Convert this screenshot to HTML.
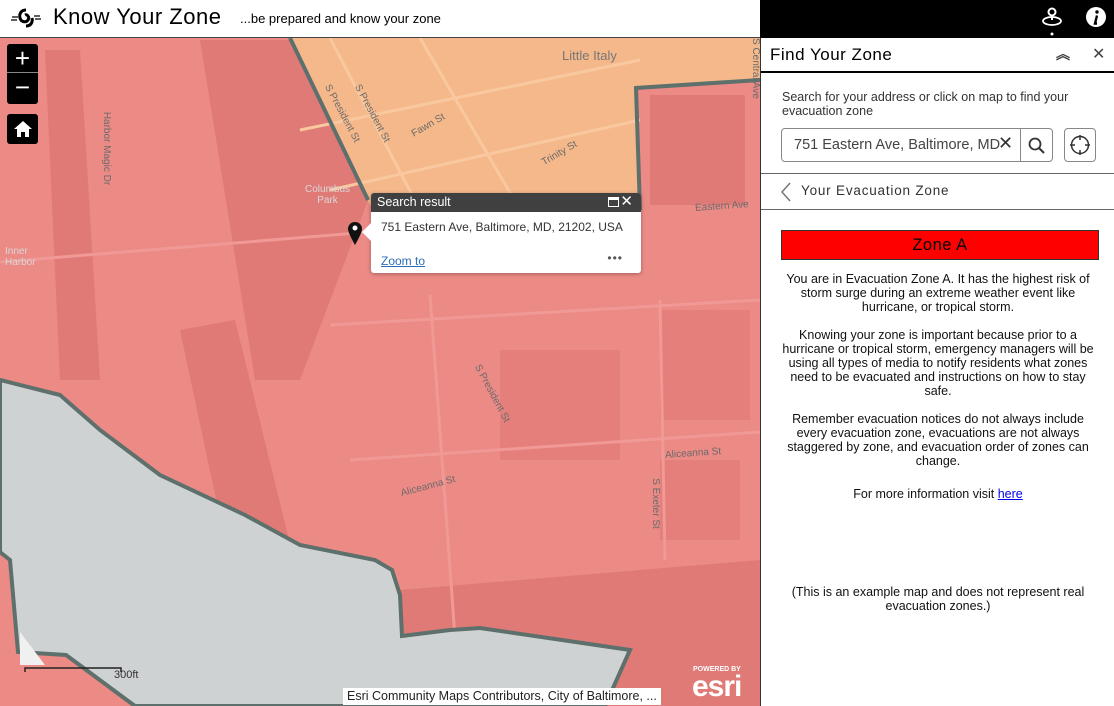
<!DOCTYPE html>
<html><head><meta charset="utf-8"><style>
*{margin:0;padding:0;box-sizing:border-box}
body{width:1114px;height:706px;overflow:hidden;font-family:"Liberation Sans",sans-serif;background:#fff;position:relative}
.hdr{position:absolute;left:0;top:0;width:760px;height:38px;background:#fff;border-bottom:1px solid #444}
.topr{position:absolute;left:760px;top:0;width:354px;height:38px;background:#000}
.map{position:absolute;left:0;top:38px;width:760px;height:668px;overflow:hidden}
.panel{position:absolute;left:760px;top:38px;width:354px;height:668px;background:#fff;border-left:1px solid #333}
.btn{position:absolute;left:7px;width:31px;background:#000;border-radius:3px;color:#fff;text-align:center}
.lbl{position:absolute;font-size:10px;color:#6b6b6b;white-space:nowrap}
</style></head><body>
<div class="hdr">
 <svg style="position:absolute;left:10px;top:7px" width="32" height="22" viewBox="0 0 32 22"><path d="M16 3c-5 0-7 4-6 8 1 4 6 5 8 2 2-3-1-6-3-5M16 19c5 0 7-4 6-8" stroke="#000" stroke-width="3" fill="none"/><path d="M2 10h6M1 13h6M24 9h6M25 12h6" stroke="#000" stroke-width="1.2"/></svg>
 <div style="position:absolute;left:53px;top:4px;font-size:22px;letter-spacing:0.5px">Know Your Zone</div>
 <div style="position:absolute;left:240px;top:11px;font-size:13px">...be prepared and know your zone</div>
</div>
<div class="topr">
 <svg style="position:absolute;left:1041px;left:281px;top:6px" width="22" height="30" viewBox="0 0 22 30"><circle cx="11" cy="6" r="3.5" fill="none" stroke="#fff" stroke-width="2"/><path d="M11 10v4" stroke="#fff" stroke-width="2"/><ellipse cx="11" cy="15" rx="9" ry="4" fill="none" stroke="#fff" stroke-width="1.8"/><circle cx="11" cy="28" r="1.5" fill="#fff"/></svg>
 <svg style="position:absolute;left:325px;top:6px" width="22" height="22" viewBox="0 0 22 22"><circle cx="11" cy="11" r="10" fill="#fff"/><circle cx="12" cy="6" r="1.7" fill="#000"/><path d="M12 9.5l-2 8h2" stroke="#000" stroke-width="2.4" fill="none"/></svg>
</div>
<div class="map">
<svg width="760" height="668" viewBox="0 38 760 668" style="position:absolute;left:0;top:0">
 <rect x="0" y="38" width="760" height="668" fill="#ec8a86"/>
 <polygon points="45,50 80,50 100,380 60,380" fill="#df7a77"/>
 <polygon points="200,40 290,40 370,195 300,380 255,380" fill="#df7a77"/>
 <polygon points="180,330 235,320 330,706 260,706" fill="#df7a77"/>
 <polygon points="400,590 760,560 760,706 400,706" fill="#df7a77"/>
 <rect x="650" y="95" width="95" height="110" fill="#df7a77"/>
 <rect x="500" y="350" width="120" height="110" fill="#e47f7c"/>
 <rect x="660" y="310" width="90" height="110" fill="#e47f7c"/>
 <rect x="660" y="460" width="80" height="80" fill="#e47f7c"/>
 <path d="M0 262 L370 232 M330 325 L760 300 M350 460 L760 432 M430 295 L460 706 M660 300 L665 560" stroke="#f09995" stroke-width="3" fill="none"/>
 <polygon points="290,38 760,38 760,80 636,88 640,210 370,205" fill="#f5b88b"/>
 <path d="M330 38 L420 210 M420 38 L520 210 M300 130 L640 60 M330 190 L640 120" stroke="#f9c89f" stroke-width="3" fill="none"/>
 <path d="M290,38 L368,200 M760,80 L636,88 L640,210" stroke="#5d706c" stroke-width="4" fill="none"/>
 <polygon points="0,380 60,395 100,430 160,475 245,515 300,545 375,560 392,570 400,595 402,636 450,630 480,628 630,650 605,706 135,706 66,655 18,652 10,560 0,552" fill="#cfd2d3" stroke="#5d706c" stroke-width="4"/>
 <polygon points="20,632 45,665 20,665" fill="#f0f0f0"/>
 <path d="M25 672 v-4 h96 v4" stroke="#222" stroke-width="1.5" fill="none"/>
</svg>
 <div class="lbl" style="left:562px;top:10px;font-size:13px;color:#777">Little Italy</div>
 <div class="lbl" style="left:305px;top:146px;color:#d8d8d8;text-align:center;line-height:11px">Columbus<br>Park</div>
 <div class="lbl" style="left:5px;top:208px;color:#d8d8d8;line-height:11px">Inner<br>Harbor</div>
 <div class="lbl" style="left:695px;top:163px;transform:rotate(-4deg)">Eastern Ave</div>
 <div class="lbl" style="left:665px;top:410px;transform:rotate(-4deg)">Aliceanna St</div>
 <div class="lbl" style="left:400px;top:443px;transform:rotate(-15deg)">Aliceanna St</div>
 <div class="lbl" style="left:410px;top:82px;transform:rotate(-30deg)">Fawn St</div>
 <div class="lbl" style="left:540px;top:110px;transform:rotate(-30deg)">Trinity St</div>
 <div class="lbl" style="left:70px;top:105px;transform:rotate(90deg)">Harbor Magic Dr</div>
 <div class="lbl" style="left:310px;top:70px;transform:rotate(62deg)">S President St</div>
 <div class="lbl" style="left:340px;top:70px;transform:rotate(62deg)">S President St</div>
 <div class="lbl" style="left:460px;top:350px;transform:rotate(62deg)">S President St</div>
 <div class="lbl" style="left:630px;top:460px;transform:rotate(90deg)">S Exeter St</div>
 <div class="lbl" style="left:725px;top:25px;transform:rotate(90deg)">S Central Ave</div>
 <div class="lbl" style="left:114px;top:631px;color:#333;font-size:11px">300ft</div>
 <div style="position:absolute;left:343px;top:650px;background:#fff;font-size:12.5px;padding:0 4px;height:17px;line-height:17px;color:#222">Esri Community Maps Contributors, City of Baltimore, ...</div>
 <div style="position:absolute;left:693px;top:628px;color:#fff;font-size:7px;font-weight:bold">POWERED BY</div>
 <div style="position:absolute;left:692px;top:632px;color:#fff;font-size:30px;font-weight:bold;letter-spacing:-1px">esri</div>
 <div class="btn" style="top:6px;height:60px;font-size:26px;line-height:28px">+<div style="border-top:1px solid #888"></div>−</div>
 <div class="btn" style="top:76px;height:30px"><svg width="20" height="18" viewBox="0 0 20 18" style="margin-top:6px"><path d="M10 1L1 9h3v8h4v-5h4v5h4V9h3z" fill="#fff"/></svg></div>
 <svg style="position:absolute;left:348px;top:184px" width="14" height="24" viewBox="0 0 14 24"><path d="M7 0C3 0 0 3 0 7c0 4 7 16 7 16s7-12 7-16c0-4-3-7-7-7z" fill="#111"/><circle cx="7" cy="6" r="2.5" fill="#fff"/></svg>
 <div style="position:absolute;left:371px;top:155px;width:270px;height:80px;background:#fff;border-radius:3px;box-shadow:0 1px 4px rgba(0,0,0,.3);overflow:hidden">
  <div style="background:#404040;color:#fff;height:19px;font-size:12.5px;line-height:19px;padding-left:6px">Search result<span style="position:absolute;right:8px;top:-1px;font-size:15px">✕</span><span style="position:absolute;right:22px;top:4px;width:11px;height:10px;border:1.5px solid #fff;border-top-width:3px"></span></div>
  <div style="font-size:12px;color:#333;padding:8px 10px">751 Eastern Ave, Baltimore, MD, 21202, USA</div>
  <div style="position:absolute;left:10px;top:61px;font-size:12px;color:#2a6ebb;text-decoration:underline">Zoom to</div>
  <div style="position:absolute;right:18px;top:58px;font-size:12px;color:#555;letter-spacing:1px">•••</div>
 </div>
 <div style="position:absolute;left:362px;top:185px;width:0;height:0;border:9px solid transparent;border-right-color:#fff;border-left:0"></div>
</div>
<div class="panel">
 <div style="position:absolute;left:9px;top:7px;font-size:17px;letter-spacing:.5px">Find Your Zone</div>
 <div style="position:absolute;left:295px;top:6px;font-size:14px;color:#444;font-weight:bold">︽</div>
 <div style="position:absolute;left:331px;top:6px;font-size:16px;color:#444">✕</div>
 <div style="position:absolute;left:0;top:33px;width:354px;border-top:2px solid #000"></div>
 <div style="position:absolute;left:21px;top:52px;font-size:12.5px;color:#333;line-height:14px;width:300px">Search for your address or click on map to find your evacuation zone</div>
 <div style="position:absolute;left:20px;top:90px;width:272px;height:34px;border:1px solid #888;border-radius:4px">
  <div style="position:absolute;left:12px;top:8px;font-size:14.5px;color:#444">751 Eastern Ave, Baltimore, MD</div>
  <div style="position:absolute;left:216px;top:4px;font-size:18px;color:#333">✕</div>
  <div style="position:absolute;left:238px;top:0;width:1px;height:32px;background:#888"></div>
  <svg style="position:absolute;left:245px;top:7px" width="20" height="20" viewBox="0 0 20 20"><circle cx="8" cy="8" r="5.5" stroke="#333" stroke-width="1.8" fill="none"/><path d="M12 12l5 5" stroke="#333" stroke-width="2"/></svg>
 </div>
 <div style="position:absolute;left:303px;top:90px;width:32px;height:34px;border:1px solid #888;border-radius:4px">
  <svg style="position:absolute;left:4px;top:5px" width="22" height="22" viewBox="0 0 22 22"><circle cx="11" cy="11" r="8.5" stroke="#333" stroke-width="1.5" fill="none"/><path d="M11 1v5M11 16v5M1 11h5M16 11h5" stroke="#333" stroke-width="1.5"/></svg>
 </div>
 <div style="position:absolute;left:0;top:135px;width:354px;border-top:1px solid #666"></div>
 <svg style="position:absolute;left:18px;top:143px" width="14" height="22" viewBox="0 0 14 22"><path d="M11 2L3 11l8 9" stroke="#777" stroke-width="1.5" fill="none"/></svg>
 <div style="position:absolute;left:40px;top:145px;font-size:13.5px;color:#333;letter-spacing:.8px">Your Evacuation Zone</div>
 <div style="position:absolute;left:0;top:171px;width:354px;border-top:1px solid #666"></div>
 <div style="position:absolute;left:20px;top:192px;width:318px;height:30px;background:#f00;border:1px solid #333;text-align:center;font-size:16.5px;line-height:28px;letter-spacing:.5px">Zone A</div>
 <div style="position:absolute;left:18px;top:234px;width:318px;text-align:center;font-size:12.5px;line-height:14px;color:#111">
  <p>You are in Evacuation Zone A. It has the highest risk of storm surge during an extreme weather event like hurricane, or tropical storm.</p><br>
  <p>Knowing your zone is important because prior to a hurricane or tropical storm, emergency managers will be using all types of media to notify residents what zones need to be evacuated and instructions on how to stay safe.</p><br>
  <p>Remember evacuation notices do not always include every evacuation zone, evacuations are not always staggered by zone, and evacuation order of zones can change.</p><br>
  <p style="margin-top:5px">For more information visit <span style="color:#00e;text-decoration:underline">here</span></p>
 </div>
 <div style="position:absolute;left:18px;top:547px;width:318px;text-align:center;font-size:12.5px;line-height:14px;color:#111">(This is an example map and does not represent real evacuation zones.)</div>
</div>
</body></html>
